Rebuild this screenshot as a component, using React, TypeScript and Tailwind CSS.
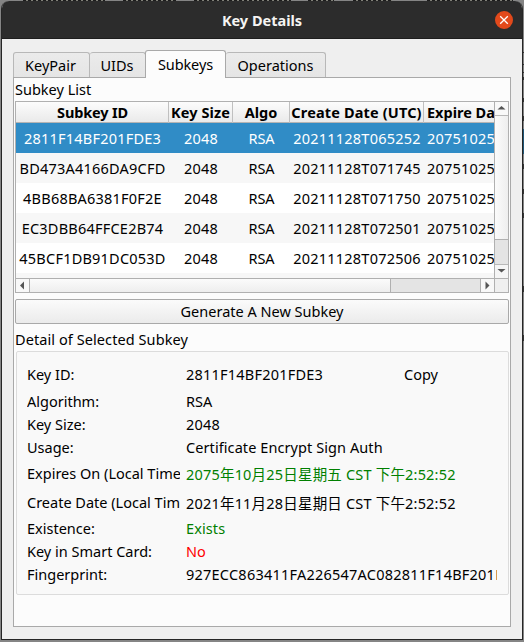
import React from "react";

const tabs = [
  { label: "KeyPair", box: "w-[77px] h-[25px] pr-[2px]", text: "" },
  { label: "UIDs", box: "w-[56px] h-[25px] border-l-0 pr-px", text: "" },
  { label: "Subkeys", box: "", text: "tracking-[-0.1px]" },
  { label: "Operations", box: "w-[100px] h-[25px] border-l-0", text: "" },
];

const keys = [
  ["2811F14BF201FDE3", "20211128T065252"],
  ["BD473A4166DA9CFD", "20211128T071745"],
  ["4BB68BA6381F0F2E", "20211128T071750"],
  ["EC3DBB64FFCE2B74", "20211128T072501"],
  ["45BCF1DB91DC053D", "20211128T072506"],
];

const columns = "grid grid-cols-[153px_64px_57px_134px_71px] w-[479px]";

const details = [
  { label: "Key ID:", value: "2811F14BF201FDE3", row: "h-[31px]", color: "tracking-[0.22px]", extra: "Copy" },
  { label: "Algorithm:", value: "RSA", row: "h-[23px]", color: "" },
  { label: "Key Size:", value: "2048", row: "h-[23px]", color: "tracking-[0.2px]" },
  { label: "Usage:", value: "Certificate Encrypt Sign Auth", row: "h-[23px]", color: "tracking-[0.08px]" },
  { label: "Expires On (Local Time)", value: "2075年10月25日星期五 CST 下午2:52:52", row: "h-[29px]", color: "text-[#008000] tracking-[0.19px] pt-[2px]" },
  { label: "Create Date (Local Time)", value: "2021年11月28日星期日 CST 下午2:52:52", row: "h-[29px]", color: "tracking-[0.19px] pt-[2px]" },
  { label: "Existence:", value: "Exists", row: "h-[23px]", color: "text-[#008000] tracking-[0.1px]" },
  { label: "Key in Smart Card:", value: "No", row: "h-[23px]", color: "text-[#ff0000]" },
  { label: "Fingerprint:", value: "927ECC863411FA226547AC082811F14BF201FDE3", row: "h-[23px]", color: "tracking-[0.23px]" },
];

// Slivers of the window behind: toolbar text along the top, list rows at the right.
const behindTop = [[23, 82], [123, 53], [194, 97], [308, 26], [353, 39], [427, 86]];
const behindRight = [[52, 1], [64, 1], [72, 1], [77, 3], [98, 4], [116, 5], [164, 5], [189, 5], [213, 5], [286, 6], [335, 6]];

function Arrow({ d }: { d: string }) {
  return (
    <svg width="13" height="13" viewBox="0 0 13 13" fill="#555">
      <path d={d} />
    </svg>
  );
}

function TitleBar() {
  return (
    <header className="relative flex h-[38px] shrink-0 items-center justify-center rounded-t-[7px] border-b border-[#1e1e1e] bg-[#2c2c2c] text-[14.5px] font-bold text-[#f5f4f2]">
      <span className="pt-[2px]">Key Details</span>
      <button className="absolute top-[10px] right-[9px] flex size-[18px] items-center justify-center rounded-full bg-[#e2491b]">
        <svg width="10" height="10" viewBox="0 0 10 10" stroke="#fff" strokeWidth="1.3">
          <path d="M1.2 1.2 8.8 8.8M8.8 1.2 1.2 8.8" />
        </svg>
      </button>
    </header>
  );
}

function TabBar() {
  return (
    <nav className="flex h-[27px] items-end">
      {tabs.map((t) =>
        t.label === "Subkeys" ? (
          <div key={t.label} className="relative -mb-px -ml-px flex h-[28px] w-[81px] items-center justify-center rounded-t-[3px] border border-b-0 border-[#a9a9a9] bg-[#fcfcfc]">
            <span className={t.text}>{t.label}</span>
          </div>
        ) : (
          <div key={t.label} className={`flex items-center justify-center rounded-t-[3px] border border-b-0 border-[#b8b8b8] bg-linear-to-b from-[#ebebeb] to-[#e5e5e5] pt-[2px] ${t.box}`}>
            <span className={t.text}>{t.label}</span>
          </div>
        ),
      )}
    </nav>
  );
}

function SubkeyTable() {
  return (
    <section className="flex h-[192px] w-[494px] flex-col border border-[#b0b0b0] bg-white">
      <div className="flex h-[176px]">
        <div className="w-[478px] overflow-hidden bg-[#f7f7f7]">
          <div className={`${columns} h-[21px] border-b border-[#b4b4b4] bg-linear-to-b from-[#fcfcfc] to-[#eaeaea] font-bold leading-[21px] whitespace-nowrap`}>
            <div className="border-r border-[#c0c0c0] pl-px text-center tracking-[-0.15px]">Subkey ID</div>
            <div className="flex justify-center border-r border-[#c0c0c0]"><span className="tracking-[0.12px]">Key Size</span></div>
            <div className="border-r border-[#c0c0c0] text-center">Algo</div>
            <div className="flex justify-center border-r border-[#c0c0c0]"><span className="tracking-[0.15px]">Create Date (UTC)</span></div>
            <div className="pl-[3px]">Expire Date (UTC)</div>
          </div>
          {keys.map(([id, date], i) => (
            <div key={id} className={`${columns} h-[30px] text-center leading-[31px] whitespace-nowrap ${i === 0 ? "bg-[#308cc6] text-white" : i % 2 ? "bg-[#f7f7f7]" : "bg-white"}`}>
              <div className="tracking-[0.22px]">{id}</div>
              <div className="tracking-[0.15px]">2048</div>
              <div>RSA</div>
              <div className="tracking-[0.22px]">{date}</div>
              <div className="pl-[3px] text-left tracking-[0.22px]">20751025T065252</div>
            </div>
          ))}
        </div>
        <div className="flex h-[176px] w-[14px] flex-col border-l border-[#b0b0b0] bg-[#e4e4e4]">
          <div className="flex h-[14px] border-b border-[#b8b8b8] bg-[#f9f9f9]"><Arrow d="M2.5 7.5 6.5 4 10.5 7.5Z" /></div>
          <div className="h-[124px] border-b border-[#b0b0b0] bg-linear-to-r from-[#fbfbfb] to-[#eeeeee]" />
          <div className="h-[24px]" />
          <div className="flex h-[14px] border-t border-[#b8b8b8] bg-[#f5f5f5]"><Arrow d="M2.5 4 10.5 4 6.5 7.5Z" /></div>
        </div>
      </div>
      <div className="flex h-[14px] border-t border-[#b0b0b0] bg-[#e4e4e4]">
        <div className="flex w-[14px] border-r border-[#b0b0b0] bg-[#f8f8f8]"><Arrow d="M8 2.5V10.5L4 6.5Z" /></div>
        <div className="w-[361px] border-r border-[#b0b0b0] bg-linear-to-b from-[#fbfbfb] to-[#eeeeee]" />
        <div className="w-[89px]" />
        <div className="flex w-[14px] border-l border-[#b0b0b0] bg-[#f8f8f8]"><Arrow d="M4.5 2.5V10.5L8.5 6.5Z" /></div>
        <div className="flex-1 border-l border-[#b0b0b0] bg-[#efefef]" />
      </div>
    </section>
  );
}

export default function App() {
  return (
    <div className="relative h-[642px] w-[524px] overflow-hidden bg-[#858585] pt-px pl-px font-['Noto_Sans','Noto_Sans_CJK_SC',sans-serif] text-[14.5px] text-black">
      {behindTop.map(([x, w]) => (
        <div key={x} className="absolute top-0 h-px bg-[repeating-linear-gradient(90deg,#1c1c1c_0_3px,#808078_3px_5px)]" style={{ left: x, width: w }} />
      ))}
      {behindRight.map(([y, h]) => (
        <div key={y} className="absolute right-0 w-px bg-[#333333]" style={{ top: y, height: h }} />
      ))}
      <div className="absolute top-[129px] right-0 h-[25px] w-px bg-[#1f5678]" />
      <main className="flex h-[639px] w-[522px] flex-col rounded-t-[8px] border border-t-0 border-[#262626] bg-[#efefef]">
        <TitleBar />
        <div className="pt-[11px] pl-[11px]">
          <TabBar />
          <div className="h-[550px] w-[498px] border border-[#a9a9a9] bg-[#fcfcfc] pl-px">
            <h2 className="flex h-[23px] items-center">Subkey List</h2>
            <SubkeyTable />
            <button className="mt-[6px] flex h-[25px] w-[494px] items-center justify-center rounded-[2px] border border-[#a9a9a9] bg-linear-to-b from-[#fbfbfb] to-[#ebebeb]">Generate A New Subkey</button>
            <h2 className="flex h-[27px] items-center pt-[5px] tracking-[0.08px]">Detail of Selected Subkey</h2>
            <section className="ml-px h-[244px] w-[493px] rounded-[2px] border border-[#dcdcdc] bg-[#f9f9f9] pt-[7px] pr-[11px] pl-[10px] whitespace-nowrap">
              {details.map((d) => (
                <div key={d.label} className={`flex items-center ${d.row}`}>
                  <span className="w-[153px] overflow-hidden">{d.label}</span>
                  <span className={`ml-[6px] flex-1 overflow-hidden ${d.color}`}>{d.value}</span>
                  {d.extra && <span className="w-[93px]">{d.extra}</span>}
                </div>
              ))}
            </section>
          </div>
        </div>
      </main>
    </div>
  );
}
